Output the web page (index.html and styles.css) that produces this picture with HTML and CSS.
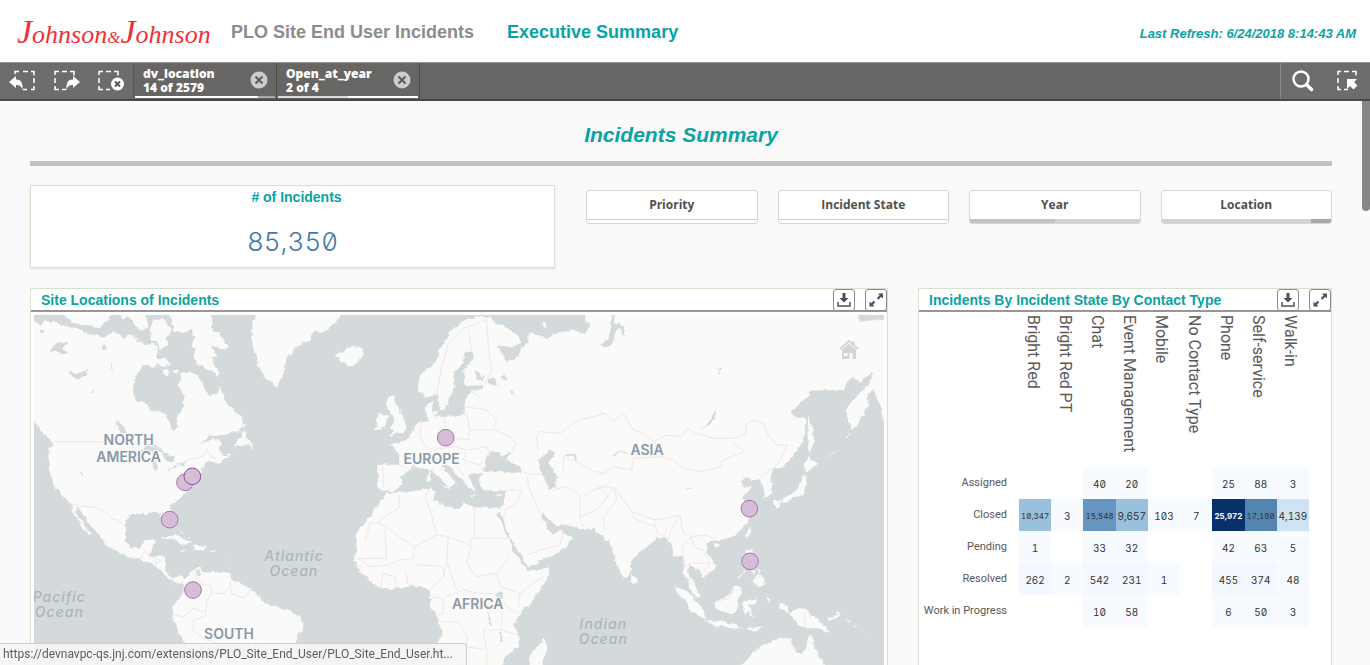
FILE: index.html
```html
<!DOCTYPE html>
<html lang="en">
<head>
<meta charset="utf-8">
<title>PLO Site End User Incidents</title>
<link rel="stylesheet" href="styles.css">
</head>
<body>
<header class="top">
  <div class="logo"><span class="logo-cap">J</span>ohnson<span class="logo-amp">&amp;</span><span class="logo-cap">J</span>ohnson</div>
  <h1 class="app-name">PLO Site End User Incidents</h1>
  <h2 class="page-name">Executive Summary</h2>
  <p class="refresh">Last Refresh: 6/24/2018 8:14:43 AM</p>
</header>

<nav class="toolbar" aria-label="Selections">
  <div class="tools">
    <button class="tool" aria-label="Step back">
      <svg width="28" height="24" viewBox="0 0 28 24"><path class="dash" d="M6 5V2.500h4M14 2.500h5M22 2.500h3v4M25 9v5M25 17v3.500h-3M18 20.500h-4"/><path class="solid" d="M0 13l7-6v3.500c5 0 7 3 6.500 10.500c-1-4-3-5-6.500-5v3z"/></svg>
    </button>
    <button class="tool" aria-label="Step forward">
      <svg width="28" height="24" viewBox="0 0 28 24"><path class="dash" d="M2 6V2.500h4M9 2.500h5M17 2.500h4v4M2 9v5M2 17v3.500h4M9 20.500h4"/><path class="solid" d="M27 13l-7-6v3.500c-5 0-7 3-6.500 10.500c1-4 3-5 6.500-5v3z"/></svg>
    </button>
    <button class="tool" aria-label="Clear all selections">
      <svg width="28" height="24" viewBox="0 0 28 24"><path class="dash" d="M2 6V2.500h4M9 2.500h5M17 2.500h4v4M2 9v5M2 17v3.500h4M9 20.500h4"/><circle class="solid" cx="20.500" cy="15" r="6.500"/><path class="cross" d="M18 12.500l5 5m0-5l-5 5"/></svg>
    </button>
  </div>
  <div class="selection">
    <div class="selection-text"><b>dv_location</b><b>14 of 2579</b></div>
    <button class="clear" aria-label="Clear dv_location"><svg width="18" height="18" viewBox="0 0 18 18"><circle cx="9" cy="9" r="8.500"/><path d="M5.500 5.500l7 7m0-7l-7 7"/></svg></button>
    <span class="state"><i class="on wide"></i><i class="off"></i></span>
  </div>
  <div class="selection">
    <div class="selection-text"><b>Open_at_year</b><b>2 of 4</b></div>
    <button class="clear" aria-label="Clear Open_at_year"><svg width="18" height="18" viewBox="0 0 18 18"><circle cx="9" cy="9" r="8.500"/><path d="M5.500 5.500l7 7m0-7l-7 7"/></svg></button>
    <span class="state"><i class="soft"></i><i class="on"></i></span>
  </div>
  <div class="tools-right">
    <button class="tool" aria-label="Search"><svg width="24" height="24" viewBox="0 0 24 24"><circle class="lens" cx="10" cy="10" r="7.500"/><path class="handle" d="M15.500 15.500l5 5"/></svg></button>
    <button class="tool" aria-label="Selections tool"><svg width="24" height="24" viewBox="0 0 24 24"><path class="dash" d="M3 6V2.500h3M9 2.500h5M17 2.500h4v4M3 9v5M3 17v3.500h3M9 20.500h4"/><path class="solid" d="M12 10h10l-3 3 3.500 3.500-4 4-3.500-3.500-3 3z"/></svg></button>
  </div>
</nav>

<main class="sheet">
  <h2 class="sheet-title">Incidents Summary</h2>
  <hr class="rule">
  <div class="row row-top">
    <section class="kpi">
      <h3 class="heading">#&nbsp;of Incidents</h3>
      <p class="kpi-value">85,350</p>
    </section>
    <div class="filters">
      <button class="filter"><span>Priority</span><i class="meter"></i></button>
      <button class="filter"><span>Incident State</span><i class="meter"></i></button>
      <button class="filter"><span>Year</span><i class="meter grey"><i class="half"></i></i></button>
      <button class="filter"><span>Location</span><i class="meter grey end"><i class="part"></i></i></button>
    </div>
  </div>

  <div class="row row-main">
    <section class="panel">
      <header class="panel-head">
        <h3 class="heading">Site Locations of Incidents</h3>
        <button class="mini" aria-label="Download map"><svg width="18" height="18" viewBox="0 0 18 18"><path class="dark" d="M7.500 2h3v5h3L9 11.500 4.500 7h3z"/><path class="line" d="M3 11v4h12v-4"/></svg></button>
        <button class="mini" aria-label="Expand map"><svg width="18" height="18" viewBox="0 0 18 18"><path class="dark" d="M11 2.500h5v5l-1.700-1.700-3 3L9.700 7.200l3-3zM2.500 10.500l1.700 1.700 2.500-2.500 1.600 1.600-2.500 2.500L7.500 15.500h-5z"/></svg></button>
      </header>
      <div class="map">
        <svg class="world" viewBox="12 15 2550 1050" preserveAspectRatio="xMidYMin slice" role="img" aria-label="World map of incident sites">
          <defs>
            <filter id="coast" x="0" y="0" width="100%" height="100%">
              <feTurbulence type="fractalNoise" baseFrequency="0.045" numOctaves="3" seed="4"/>
              <feDisplacementMap in="SourceGraphic" scale="18" xChannelSelector="R" yChannelSelector="G"/>
            </filter>
          </defs>
          <g filter="url(#coast)">
            <g class="land">
              <path d="M-20 30L20 38 35 45 45 28 60 40 75 32 90 42 120 52 150 60 180 72 215 80 240 77 255 60 270 75 285 87 300 75 320 82 325 97 345 105 370 102 385 112 378 140 400 148 425 165 400 168 385 158 375 172 345 162 325 185 315 200 308 240 322 275 345 280 365 300 400 310 415 325 418 345 430 362 445 350 440 320 460 290 462 260 445 225 455 190 490 190 510 205 525 240 545 262 560 250 567 225 575 250 595 285 615 305 635 320 642 350 600 372 575 375 540 378 510 402 540 390 572 392 575 405 565 420 580 435 608 430 560 462 545 450 520 465 515 485 500 520 470 545 450 565 425 585 420 610 427 640 415 655 400 625 375 605 355 612 300 612 285 640 285 690 300 715 330 715 345 690 377 690 370 715 355 740 400 740 408 750 405 785 425 805 450 798 468 812 450 822 430 812 400 795 380 770 340 750 290 738 225 705 220 690 180 645 155 610 138 585 135 597 150 625 180 665 180 677 155 650 130 605 120 575 90 550 70 520 57 480 55 410 72 405 40 370 20 340 -20 315Z"/>
              <path d="M462 810L485 785 510 770 520 785 560 790 595 790 620 815 650 830 680 850 700 880 730 885 770 900 815 920 822 945 800 980 790 1010 785 1090H520L500 1030 465 1000 440 950 425 915 430 890 460 850Z"/>
              <path d="M642 360L632 385 612 405 640 410 652 402 665 422 668 402 650 387Z"/>
              <path d="M680-10L665 60 665 90 680 150 700 200 745 235 760 190 775 140 800 110 840 90 850 65 880 65 895 55 930 22V-10Z"/>
              <path d="M415-10L430 60 460 70 480 60 500 80 480 105 500 120 490 145 525 175 550 190 560 205 567 190 560 170 540 140 560 140 540 100 570 120 592 115 590 100 570 70 545 60 548 15 530-10Z"/>
              <path d="M100-10L110 25 150 45 210 52 235 30 245-10ZM270-10L275 25 295 20 310 35 330 62 355 50 350 20 355-10ZM370 32L400 25 425 60 410 80 415 105 395 118 380 100 365 90 358 60ZM398 180l15-2 2 12-15 4zM432 178l12 2-4 14-8-4z"/>
              <path d="M395 685L420 674 455 685 487 700 465 704 430 687ZM493 706L530 711 520 721 490 720ZM545 716l14 1-2 6-12-1zM448 716l20 3-8 5z"/>
              <path d="M450 655l6 8 4 10-6-4zM470 670l10 14-4 2zM590 740l6 8-4 4zM596 765l4 10-6 2z"/>
            </g>
            <g class="land" transform="translate(870 0)">
              <path d="M45 110L58 128 70 120 85 115 105 110 125 112 132 135 110 160 85 168 60 155 66 145 45 138 58 130Z"/>
              <path d="M165 325L180 308 202 315 197 350 165 362 172 345ZM205 258L222 256 222 272 235 290 245 320 262 345 250 365 205 380 222 365 208 352 224 340 222 322 210 312 200 290Z"/>
              <path d="M295 195L310 185 345 155 365 110 380 85 400 55 440 30 480 18 510 20 530 45 560 50 600 80 600 100 570 115 532 102 548 132 558 160 578 150 595 138 605 110 622 100 628 62 652 80 680 85 725 65 760 60 800 72 808 45 795 30 800-10H1720V402L1660 235 1640 260 1645 285 1635 310 1610 340 1595 365 1582 310 1585 290 1620 250 1645 225 1660 185 1645 195 1620 215 1600 200 1570 240 1540 240 1475 242 1440 280 1410 310 1455 330 1458 360 1440 410 1395 465 1360 480 1350 500 1355 550 1335 565 1330 530 1320 510 1295 510 1285 500 1260 515 1270 530 1295 532 1270 565 1285 600 1295 600 1280 640 1250 675 1210 690 1185 690 1160 705 1160 725 1185 760 1185 780 1150 803 1140 785 1110 760 1102 790 1125 825 1140 860 1125 865 1102 810 1095 795 1090 740 1060 740 1050 700 1035 680 1005 690 970 720 937 745 935 780 915 808 890 770 870 690 855 695 820 652 775 655 740 645 700 645 665 605 660 615 690 660 700 675 725 655 730 670 760 680 740 710 690 740 622 770 600 730 570 680 545 620 540 605 528 612 550 650 572 700 595 750 625 783 690 775 680 810 640 870 590 920 585 950 597 980 595 1010 550 1050V1090H370L355 1000 365 960 345 910 330 890 330 840 290 825 240 835 185 838 150 815 110 770 105 745 110 700 110 670 150 620 195 555 205 550 330 535 345 545 340 570 375 585 415 600 430 580 470 592 545 597 555 570 557 541 520 542 485 535 478 505 488 490 460 490 445 495 458 520 468 545 445 535 425 510 405 485 380 465 365 462 375 485 395 500 408 520 392 530 372 515 350 495 338 478 320 475 275 465 268 480 240 500 248 520 220 545 200 545 175 535 172 462 240 465 235 430 210 402 250 395 270 375 290 345 325 330 320 290 340 272 335 300 347 320 380 320 430 312 435 270 455 242 485 240 492 226 435 228 430 190 460 140 460 125 437 125 430 155 400 185 400 240 372 300 360 300 350 250 315 262 295 240Z"/>
              <path d="M672 985L682 1010 660 1090H625L636 1025 655 1010ZM665 40l12-2 2 12-12 2zM325 478h8l-1 16h-7zM322 498l10-2v18h-8zM365 528l24-1-4 9zM445 552l30 4-20 3zM528 556l18-4-8 8zM340 305l12-2v10h-10z"/>
              <path d="M1595 365L1582 310 1585 290 1620 250 1645 225 1635 310Z"/>
            </g>
            <g class="land" transform="translate(1710 -90)">
              <path d="M94 882L104 890 110 908 98 916 93 900ZM625 408L634 430 642 485 632 522 622 480ZM612 572L610 555 625 530 655 550 630 572ZM608 582L622 590 620 615 610 645 580 655 562 668 535 662 575 640 600 615ZM522 662L540 664 530 686 522 680ZM452 742L450 765 440 775 442 755ZM340 792L358 795 348 808Z"/>
              <path d="M440 810L455 806 460 860 440 850ZM456 905L470 885 485 880 492 915 475 918ZM455 862l10 14-8 10zM470 860l12 10-6 14zM412 895l18-22 3 2-17 22z"/>
              <path d="M345 965L380 950 410 910 428 925 415 960 410 1000 380 998 352 988ZM222 918L255 930 300 975 320 1015 300 1012 260 975ZM315 1020L350 1022 400 1033 432 1045 395 1045 340 1034ZM430 965L475 958 470 966 445 975 460 1012 442 990 436 1010 430 990ZM440 1045l30-4 20 2-20 14zM500 950l8 5-2 18-6-4z"/>
              <path d="M535 972L555 975 570 998 600 983 640 1005 665 1030 695 1058 650 1045 610 1045 590 1030 575 1005 545 985ZM680 1015l20-5 15-15 4 4-14 18-20 6zM735 1015l12 10-2 4zM755 1030l16 12-4 2zM785 1048l12 8-4 4z"/>
              <path d="M390 1180L450 1130 480 1100 510 1088 540 1070 575 1080 575 1095 585 1112 612 1120 628 1062 645 1100 660 1130 690 1180ZM670 535l22-14 30-18-28 20zM738 470l14-12-6 12z"/>
            </g>
            <g class="water">
              <path d="M62 118L82 96 110 100 100 112 112 126 95 136 80 120 60 130ZM118 182l22 10 32-15-8 18-22 16-14-12zM175 250l20-10-8 12zM258 330L270 335 292 370 280 375 265 355ZM328 422L355 403 392 412 402 428 375 422 345 430ZM368 458L382 450 380 480 370 482ZM392 428L436 442 430 458 408 450ZM408 482L442 466 438 476ZM440 462L468 457 466 466ZM30 55l10-2 2 12-10 4zM210 110l16-8 4 12-14 6zM150 490l6-3 6 8-8 2zM502 780l10 2 2 14-10-2zM240 165l6-2 2 16-6-4z"/>
              <path transform="translate(870 0)" d="M490 482L495 450 515 425 535 430 545 442 572 430 562 450 600 470 606 486 570 490 520 484ZM655 450L690 420 705 430 688 458 705 490 712 532 690 538 675 520 672 495 660 480ZM506 206l20 0 4 18-12 6-12-10zM546 195l8 0 6 18-8-4zM570 235l14 20-8 4zM730 440l34-12 4 22-6 1-2-16-28 8zM465 185l10-4 8 20 14-4-8 14-20-8zM525 850l22-4 2 18-18 4zM498 905l6 0 12 40-5 2zM542 960l4 0 3 36-5-2z"/>
              <path transform="translate(1710 -90)" d="M30 85H45L42 130 70 140 78 170 68 168 62 148 48 148 44 180 28 200 0 195 24 180 34 140ZM345 388L350 400 330 435 300 450 322 432ZM775 80H870V118L830 125 800 120 775 122ZM40 525l10-12 36 2 0 3-34 0-8 12zM262 625h8v5h-8zM350 260l8 4 12 0-8 6-4 14-4-2 2-12z"/>
            </g>
          </g>
          <g class="border">
            <path d="M72 395H325L395 420M455 460L480 447 520 440 530 418 545 440 560 445M118 580L150 588 195 592 225 605 245 625 262 630 285 648M332 748L345 720 360 740 380 745 375 765 400 745M510 775L495 800 520 825 540 825 545 850 530 875 525 920 490 930 488 960 520 985M430 915L460 920 490 895 520 905M600 815L605 850 640 865 660 840M540 850L580 850 600 830M520 985L560 1000 600 1030"/>
            <path transform="translate(870 0)" d="M350 250L365 170 385 100 430 55 500 30 505 110 515 180 495 220M445 60L455 125M430 290L470 295 500 300 530 330 520 360 450 360 440 310M450 240L485 265M372 325L375 355 405 385 445 390 450 360M305 330L300 375 310 405 340 420 400 410 440 420 500 410 510 440M275 355L295 375M520 360L560 375 590 400 575 430M240 465L275 480M188 470L190 530M380 430L400 460 420 480 430 500M440 420L430 450 480 465 490 450M650 380L660 365 720 370 775 330 860 310M650 380L655 420M730 480V440L780 460 810 480 850 490M700 540L740 530 780 555 780 620 790 650M830 540L865 520M605 485L640 495 665 490M620 500L630 540 660 610M557 541L605 540 590 580 555 600 550 620M620 735L660 720 720 705 730 670M790 560L840 530 865 560 830 600 780 620"/>
            <path transform="translate(870 0)" d="M175 635L240 590 235 555M175 635L280 710 350 675 330 600 315 560 330 535M135 690L150 640 175 640M195 655L200 745H125M110 740L150 770 205 765 240 750 280 745 285 710M350 675L385 680 450 705 455 685H565M463 592V685M385 680L380 755 370 800 330 840M285 765L365 768 375 800M455 705L440 760 470 800 530 790 560 750 570 730M530 790L540 830 600 850 640 820 670 800M600 850L595 890M380 860L430 840 480 850 520 850 550 880 590 910M330 860L370 865 370 910 345 915M365 935H415L440 975 440 1010 500 1020 490 960 540 960 595 975M440 1010L430 1065M500 1020L500 1065M545 905V960M180 835L190 790 225 800 230 835M255 780L265 825M105 765L130 770M380 755L410 840"/>
            <path transform="translate(1710 -90)" d="M0 395L20 405 40 425 70 400 100 450 130 460 160 485 200 465 245 470 260 445 290 460 340 475 400 475 435 460 440 430 460 422 490 430 505 465 530 495 562 495 540 545 520 565 480 590M185 530L220 540 250 565 305 575 360 560 370 540 435 515 400 490M160 485L185 530 100 535 95 570 40 560 0 585M0 620L45 625 70 660 95 695 165 720 200 715 240 705 250 760 275 770 320 765 350 780M95 695L100 715 165 740V720M0 680L20 650 45 625M45 625L50 660 10 710 15 755M165 740L175 765 195 765 200 740M240 705L215 750 200 790M245 800L275 770 280 800 310 810 330 850 310 880M245 800L255 860 270 850 290 850 330 850M345 965L385 955 400 930 428 930M615 990V1045M275 910L290 920"/>
          </g>
          <g class="place">
            <text x="296" y="404">NORTH</text><text x="296" y="455">AMERICA</text>
            <text x="1205" y="461">EUROPE</text><text x="1851" y="434">ASIA</text><text x="1343" y="896">AFRICA</text>
            <text x="597" y="986">SOUTH</text><text x="597" y="1037">AMERICA</text>
          </g>
          <g class="ocean">
            <text x="792" y="753">Atlantic</text><text x="792" y="798">Ocean</text>
            <text x="88" y="877">Pacific</text><text x="88" y="922">Ocean</text>
            <text x="1720" y="958">Indian</text><text x="1720" y="1003">Ocean</text>
          </g>
          <g class="site">
            <circle cx="465" cy="517" r="25"/><circle class="strong" cx="487" cy="499" r="25"/>
            <circle cx="419" cy="629" r="25"/><circle cx="489" cy="840" r="25"/>
            <circle cx="1247" cy="383" r="25"/><circle cx="2158" cy="596" r="25"/><circle cx="2160" cy="754" r="25"/>
          </g>
        </svg>
        <button class="home" aria-label="Reset map view"><svg width="20" height="20" viewBox="0 0 20 20"><path class="roof" d="M1 10l9-8 9 8M14.500 2.500v3"/><path class="house" fill-rule="evenodd" d="M3 10.500L10 4.500l7 6V20h-3.500v-6h-3v6H3zM5 14v3h3.500v-3z"/></svg></button>
      </div>
    </section>

    <section class="panel">
      <header class="panel-head">
        <h3 class="heading">Incidents By Incident State By Contact Type</h3>
        <button class="mini" aria-label="Download table"><svg width="18" height="18" viewBox="0 0 18 18"><path class="dark" d="M7.500 2h3v5h3L9 11.500 4.500 7h3z"/><path class="line" d="M3 11v4h12v-4"/></svg></button>
        <button class="mini" aria-label="Expand table"><svg width="18" height="18" viewBox="0 0 18 18"><path class="dark" d="M11 2.500h5v5l-1.700-1.700-3 3L9.700 7.200l3-3zM2.500 10.500l1.700 1.700 2.500-2.500 1.600 1.600-2.500 2.500L7.500 15.500h-5z"/></svg></button>
      </header>
      <div class="heat-wrap">
      <table class="heat">
        <colgroup><col class="label-col"><col span="9"></colgroup>
        <thead><tr><td></td>
          <th scope="col"><span>Bright Red</span></th><th scope="col"><span>Bright Red PT</span></th><th scope="col"><span>Chat</span></th><th scope="col"><span>Event Management</span></th><th scope="col"><span>Mobile</span></th><th scope="col"><span>No Contact Type</span></th><th scope="col"><span>Phone</span></th><th scope="col"><span>Self-service</span></th><th scope="col"><span>Walk-in</span></th>
        </tr></thead>
        <tbody>
          <tr><th scope="row">Assigned</th><td></td><td></td><td class="l0">40</td><td class="l0">20</td><td></td><td></td><td class="l0">25</td><td class="l0">88</td><td class="l0">3</td></tr>
          <tr><th scope="row">Closed</th><td class="l3 tight">10,347</td><td class="l0">3</td><td class="l4 tight">15,548</td><td class="l3">9,657</td><td class="l0">103</td><td class="l0">7</td><td class="l6 tight">25,972</td><td class="l5 tight">17,180</td><td class="l2">4,139</td></tr>
          <tr><th scope="row">Pending</th><td class="l0">1</td><td></td><td class="l0">33</td><td class="l0">32</td><td></td><td></td><td class="l0">42</td><td class="l0">63</td><td class="l0">5</td></tr>
          <tr><th scope="row">Resolved</th><td class="l1">262</td><td class="l0">2</td><td class="l1">542</td><td class="l1">231</td><td class="l0">1</td><td></td><td class="l1">455</td><td class="l1">374</td><td class="l0">48</td></tr>
          <tr><th scope="row">Work in Progress</th><td></td><td></td><td class="l0">10</td><td class="l0">58</td><td></td><td></td><td class="l0">6</td><td class="l0">50</td><td class="l0">3</td></tr>
        </tbody>
      </table>
      </div>
    </section>
  </div>
  <div class="scroll-thumb"></div>
</main>
<div class="status">https://devnavpc-qs.jnj.com/extensions/PLO_Site_End_User/PLO_Site_End_User.ht...</div>
</body>
</html>
```
FILE: styles.css
```css
* { box-sizing: border-box; }
body {
  margin: 0;
  height: 100vh;
  display: flex;
  flex-direction: column;
  overflow: hidden;
  background: #fafafa;
  color: #595959;
  font-family: "Liberation Sans", Arial, sans-serif;
}
h1, h2, h3, p { margin: 0; }
button { padding: 0; border: 0; background: none; font: inherit; color: inherit; cursor: pointer; }
svg { display: block; }

.top {
  flex: none;
  display: flex;
  align-items: center;
  height: 62px;
  padding: 2px 14px 0 17px;
  background: #fff;
}
.logo {
  width: 214px;
  white-space: nowrap;
  font: italic 26px "Liberation Serif", "Times New Roman", serif;
  color: #ee3338;
}
.logo-cap { font-size: 34px; }
.logo-amp { font-size: 17px; }
.app-name, .page-name { font-size: 18px; line-height: 24px; white-space: nowrap; }
.app-name { color: #8c8c8c; }
.page-name { margin-left: 33px; color: #0aa3a3; }
.refresh {
  margin-left: auto;
  padding-top: 3px;
  font: italic bold 13px "Liberation Sans", Arial, sans-serif;
  color: #0aa3a3;
}

.toolbar {
  flex: none;
  display: flex;
  height: 39px;
  border-top: 1px solid #949693;
  border-bottom: 2px solid #4a4947;
  background: #686664;
  color: #fff;
}
.tools { display: flex; align-items: center; gap: 16px; width: 134px; padding-left: 9px; border-right: 1px solid #555; background: #6e6c6a; }
.dash { fill: none; stroke: #fff; stroke-width: 1.5; }
.solid { fill: #fff; }
.cross { fill: none; stroke: #555; stroke-width: 2; }
.selection {
  display: grid;
  grid-template-columns: 1fr auto;
  grid-template-rows: 1fr 2px;
  align-items: center;
  width: 143px;
  padding: 0 1px 1px;
  border-right: 1px solid #4f4e4c;
}
.selection-text { display: grid; padding: 2px 0 0 8px; font: bold 12px/14px "Open Sans", "Noto Sans", sans-serif; }
.clear { margin-right: 7px; }
.clear circle { fill: #ccc; }
.clear path { fill: none; stroke: #5a5a5a; stroke-width: 2; }
.state { grid-column: 1 / -1; display: flex; height: 2px; }
.state i { flex: 1; }
.state .wide { flex: 7; }
.on { background: #fff; }
.off { background: #aaa; }
.soft { background: #ddd; }
.tools-right { display: flex; align-items: center; gap: 20px; margin-left: auto; padding: 0 11px 0 10px; border-left: 1px solid #888; background: #6e6c6a; }
.lens { fill: none; stroke: #fff; stroke-width: 2.5; }
.handle { stroke: #fff; stroke-width: 3.5; stroke-linecap: round; }

.sheet {
  position: relative;
  flex: 1;
  min-height: 0;
  display: flex;
  flex-direction: column;
  padding: 20px 38px 0 30px;
  overflow: hidden;
}
.sheet-title { font-size: 21px; line-height: 28px; font-style: italic; text-align: center; color: #0aa3a3; }
.rule { flex: none; width: 100%; height: 5px; margin: 12px 0 19px; border: 0; background: #c3c3c3; }
.heading { font-size: 14px; line-height: 20px; color: #0aa3a3; white-space: nowrap; }
.row { display: grid; }
.row-top { grid-template-columns: 525fr 746fr; gap: 31px; }
.kpi { height: 83px; border: 1px solid #d8dfcf; background: #fff; text-align: center; box-shadow: 0 1px 2px #e4e4e4; }
.kpi .heading { padding-left: 8px; line-height: 22px; }
.kpi-value {
  margin-top: 15px;
  font: 300 26px/38px Inter, "Noto Sans", sans-serif;
  font-feature-settings: "zero", "tnum";
  color: #4477aa;
}
.filters { display: grid; grid-template-columns: repeat(4, 1fr); gap: 20px; align-items: start; padding-top: 5px; }
.filter { height: 34px; display: flex; flex-direction: column; border: 1px solid #d6d6d6; border-radius: 3px; overflow: hidden; background: #fff; }
.filter span { width: 100%; font: bold 12px/28px "Open Sans", "Noto Sans", sans-serif; color: #505050; }
.meter { display: flex; width: 100%; height: 4px; border-top: 1px solid #d0d0d0; }
.meter.grey { border: 0; background: #d2d2d2; }
.meter.end { justify-content: flex-end; }
.half { width: 50%; background: #c3c3c3; }
.part { width: 12%; background: #a8a8a8; }

.row-main { flex: 1; min-height: 0; margin-top: 20px; grid-template-columns: 858fr 414fr; gap: 30px; }
.panel { display: flex; flex-direction: column; min-width: 0; min-height: 0; border: 1px solid #d8dfcf; border-bottom: 0; background: #fff; }
.panel-head { flex: none; display: flex; align-items: center; gap: 10px; height: 23px; border-bottom: 2px solid #979797; padding: 0 0 0 10px; }
.panel-head .heading { margin-right: auto; }
.mini { display: grid; place-items: center; width: 22px; height: 22px; border: 1px solid #8a8a8a; border-radius: 3px; background: #fff; }
.dark { fill: #505050; }
.line { fill: none; stroke: #505050; stroke-width: 1.5; }

.map { position: relative; flex: 1; min-height: 0; margin: 3px 3px 0; background: #d4dadc; }
.world { width: 100%; height: 100%; }
.land { fill: #fafaf8; }
.water { fill: #d4dadc; }
.border { fill: none; stroke: #f3e5e7; stroke-width: 3; stroke-linejoin: round; }
.place, .ocean { text-anchor: middle; font-family: Inter, "Open Sans", sans-serif; }
.place { font-size: 42px; font-weight: 600; fill: #8999a8; stroke: #fafaf8; stroke-width: 6; paint-order: stroke; }
.ocean { font-size: 42px; font-style: italic; font-weight: 500; letter-spacing: 3px; fill: #abb6be; }
.site circle { fill: #d6bdd8; stroke: #a873ad; stroke-width: 3; }
.site .strong { stroke: #8c4c93; }
.home { position: absolute; top: 24px; right: 25px; }
.roof { fill: none; stroke: #d4d4d4; stroke-width: 2; }
.house { fill: #d4d4d4; }

.heat-wrap { padding-right: 22px; }
.heat { width: 100%; table-layout: fixed; border-collapse: collapse; }
.label-col { width: 100px; }
.heat th, .heat td { padding: 0; font-weight: 400; }
.heat thead th { height: 155px; padding-right: 5px; vertical-align: top; }
.heat thead span { display: inline-block; margin-top: 3px; writing-mode: vertical-rl; font: 16px/20px Roboto, sans-serif; white-space: nowrap; }
.heat tbody tr { height: 32px; }
.heat tbody th { padding-right: 12px; text-align: right; font: 11px/16px Roboto, sans-serif; white-space: nowrap; }
.heat tbody td { padding-top: 2px; text-align: center; font: 10px/14px Inter, sans-serif; font-feature-settings: "zero", "tnum"; color: #333; }
.heat tbody .tight { font-size: 8px; }
.heat .l0 { background: #f7fbff; }
.heat .l1 { background: #f3f8fe; }
.heat .l2 { background: #cfe3f2; }
.heat .l3 { background: #99c0dc; }
.heat .l4 { background: #6595c0; }
.heat .l5 { background: #5484b0; }
.heat tbody .l6 { background: #08306b; color: #fff; font-weight: 700; }

.scroll-thumb { position: absolute; top: 0; right: 0; width: 8px; height: 110px; border-radius: 0 0 4px 4px; background: #868686; }
.status {
  position: fixed;
  left: 0;
  bottom: 0;
  height: 22px;
  padding: 0 13px 0 3px;
  border: solid #cfcfcf;
  border-width: 1px 1px 0 0;
  border-radius: 0 4px 0 0;
  background: rgba(246, 246, 246, .95);
  font: 12px/21px Roboto, "Noto Sans", sans-serif;
  color: #5c5c5c;
}
```
